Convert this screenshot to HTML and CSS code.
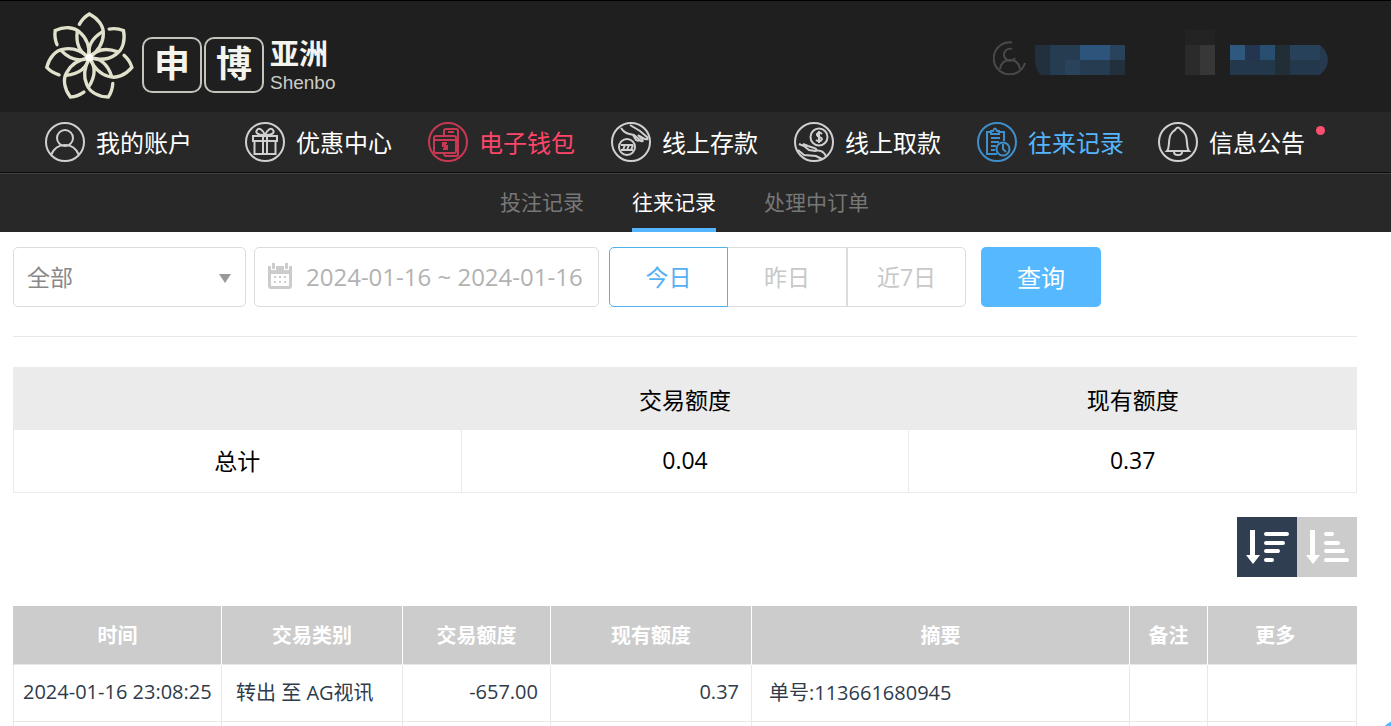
FILE: index.html
```html
<!DOCTYPE html>
<html lang="zh-CN">
<head>
  <meta charset="UTF-8" />
  <meta name="viewport" content="width=device-width, initial-scale=1.0" />
  <title>往来记录</title>
  <link rel="stylesheet" href="styles.css">
</head>
<body>
  <header class="header">
    <a class="logo" href="#">
      <svg class="logo-flower" viewBox="0 0 300 294">
        <defs>
          <g id="petal">
            <path d="M-30 -100 Q-19 -120 0 -131 C26 -118 44 -94 42 -70 Q41 -30 0 0" />
            <path d="M0 0 Q-10 -48 40 -78" />
          </g>
        </defs>
        <g transform="translate(148 149)">
          <use href="#petal" />
          <use href="#petal" transform="rotate(51.43)" />
          <use href="#petal" transform="rotate(102.86)" />
          <use href="#petal" transform="rotate(154.29)" />
          <use href="#petal" transform="rotate(205.71)" />
          <use href="#petal" transform="rotate(257.14)" />
          <use href="#petal" transform="rotate(308.57)" />
          <circle class="core" r="11" />
        </g>
      </svg>
      <span class="logo-box">申</span>
      <span class="logo-box">博</span>
      <span class="logo-side">
        <span class="logo-cn">亚洲</span>
        <span class="logo-en">Shenbo</span>
      </span>
    </a>
    <div class="account">
      <svg class="account-icon" viewBox="0 0 34 34">
        <path d="M19 1.500A16 16 0 1 0 32 22" />
        <path d="M19 8a6 6 0 1 0 3 9M7 28c1-6 5-9 10-9s9 3 10 9" />
      </svg>
      <svg class="account-name" viewBox="0 0 90 30">
        <path fill="#22303e" d="M0 0h15v30H6q-6-6-6-15z" />
        <path fill="#263c50" d="M15 0h30v15H15zM15 15h15v15H15z" />
        <path fill="#28435b" d="M30 15h15v15H30zM75 0h15v15H75z" />
        <path fill="#2d557b" d="M45 0h30v15H45z" />
        <path fill="#263d51" d="M45 15h30v15H45z" />
        <path fill="#22303e" d="M75 15h15v15H75z" />
      </svg>
      <svg class="account-balance" viewBox="0 0 143 45">
        <path fill="#232323" d="M0 0h30v15H0z" />
        <path fill="#2b2b2b" d="M0 15h15v30H0z" />
        <path fill="#373737" d="M15 15h15v30H15z" />
        <path fill="#2e587e" d="M45 15h15v15H45z" />
        <path fill="#24364f" d="M60 15h15v15H60z" />
        <path fill="#294f70" d="M75 15h15v15H75z" />
        <path fill="#24384c" d="M45 30h45v15H45zM105 30h30v15h-30z" />
        <path fill="#222e35" d="M90 15h15v30H90z" />
        <path fill="#27415a" d="M105 15h30v15h-30z" />
        <path fill="#253a4f" d="M135 15q8 7 8 15t-8 15z" />
      </svg>
    </div>
  </header>

  <nav class="main-nav">
    <a class="nav-item" href="#">
      <svg viewBox="0 0 40 40"><circle cx="20" cy="20" r="19" /><circle cx="20" cy="16" r="8" /><path d="M6 33c3-7 8-10 14-10s11 3 14 10" /></svg>
      我的账户
    </a>
    <a class="nav-item" href="#">
      <svg viewBox="0 0 40 40"><circle cx="20" cy="20" r="19" /><path d="M8 14h24v5H8zM9.500 19v13h21V19M18 14v18M22 14v18M19 13c-6 0-9-2-7-5s6 0 8 5c2-5 6-8 8-5s-1 5-7 5" /></svg>
      优惠中心
    </a>
    <a class="nav-item wallet" href="#">
      <svg viewBox="0 0 40 40"><circle cx="20" cy="20" r="19" /><path d="M16 14V9q0-2 2-2h10q2 0 2 2v23q0 2-2 2H18q-2 0-2-3M20 10h6M8 14h18q2 0 2 2v13q0 2-2 2H8q-2 0-2-2V16q0-2 2-2zM6 18h22M19 21h-4v3h4v3h-4M17 20v8" /></svg>
      电子钱包
    </a>
    <a class="nav-item" href="#">
      <svg viewBox="0 0 40 40"><circle cx="20" cy="20" r="19" /><circle cx="16" cy="25" r="8" /><path d="M10 23h12M10 28h12M12 28l2-5M16 28l2-5M20 28l2-5M10 6c3 5 7 6 13 7l7 6q3 1 1-2l-4-4 7 4q4 1 2-2L29 9 19 3M22 13l3 5q3 2 3-1" /></svg>
      线上存款
    </a>
    <a class="nav-item" href="#">
      <svg viewBox="0 0 40 40"><circle cx="20" cy="20" r="19" /><circle cx="25" cy="15" r="8.500" /><path d="M28 12q-3-3-5 0c-1 3 5 3 5 5q-2 4-6 1M25 9v12M5 22l5 2 5 4 6 1q3-2-1-3l-6-2-5-2M4 28l6 5 12 1 6 3M20 29c7-2 10 1 12 5" /></svg>
      线上取款
    </a>
    <a class="nav-item current" href="#">
      <svg viewBox="0 0 40 40"><circle cx="20" cy="20" r="19" /><path d="M20 32H10V10h4M22 10h5v9M14 12V9h2q2-5 4 0h2v3zM14 16h9M14 20h8M14 24h5M14 28h4" /><circle cx="26" cy="27" r="6.500" /><path d="M26 22v5l3 3" /></svg>
      往来记录
    </a>
    <a class="nav-item" href="#">
      <svg viewBox="0 0 40 40"><circle cx="20" cy="20" r="19" /><path d="M9 29c3-3 1-13 4-17q2-3 4-4 3-5 6 0 2 1 4 4c3 4 1 14 4 17zM16 30q0 3 4 3t4-3" /></svg>
      信息公告
      <span class="dot"></span>
    </a>
  </nav>

  <nav class="sub-nav">
    <a href="#">投注记录</a>
    <a class="active" href="#">往来记录</a>
    <a href="#">处理中订单</a>
  </nav>

  <main class="content">
    <form class="filters">
      <div class="select-box">
        <select aria-label="交易类别"><option>全部</option></select>
      </div>
      <div class="date-box">
        <svg viewBox="0 0 26 28">
          <path fill="#ccc" fill-rule="evenodd" d="M1 4h3v4h5V4h8v4h5V4h3v20q0 3-3 3H4q-3 0-3-3zM4 12v12h18V12z" />
          <path fill="#ccc" d="M5 1h3v6H5zM18 1h3v6h-3zM7 14h2v2H7zM12 14h2v2h-2zM17 14h2v2h-2zM7 19h2v2H7zM12 19h2v2h-2zM17 19h2v2h-2z" />
        </svg>
        <input type="text" aria-label="日期" value="2024-01-16 ~ 2024-01-16">
      </div>
      <div class="day-group">
        <button type="button" class="active">今日</button>
        <button type="button">昨日</button>
        <button type="button">近7日</button>
      </div>
      <button type="submit" class="btn">查询</button>
    </form>

    <table class="summary">
      <thead>
        <tr><th></th><th>交易额度</th><th>现有额度</th></tr>
      </thead>
      <tbody>
        <tr><td>总计</td><td>0.04</td><td>0.37</td></tr>
      </tbody>
    </table>

    <div class="sort">
      <button class="active" aria-label="降序">
        <svg viewBox="0 0 60 60"><path d="M13 13h5v25h5l-7 9-7-9h4z" /><path class="bars" d="M29 17h21M29 26h17M29 34h12M29 43h6" /></svg>
      </button>
      <button aria-label="升序">
        <svg viewBox="0 0 60 60"><path d="M13 13h5v25h5l-7 9-7-9h4z" /><path class="bars" d="M29 17h6M29 26h12M29 34h17M29 43h21" /></svg>
      </button>
    </div>

    <table class="records">
      <colgroup>
        <col class="c-time"><col class="c-type"><col class="c-amount"><col class="c-balance"><col class="c-summary"><col class="c-note"><col class="c-more">
      </colgroup>
      <thead>
        <tr><th>时间</th><th>交易类别</th><th>交易额度</th><th>现有额度</th><th>摘要</th><th>备注</th><th class="more">更多</th></tr>
      </thead>
      <tbody>
        <tr>
          <td>2024-01-16 23:08:25</td>
          <td class="type">转出 至 AG视讯</td>
          <td class="num">-657.00</td>
          <td class="num">0.37</td>
          <td class="desc">单号:113661680945</td>
          <td></td>
          <td></td>
        </tr>
        <tr><td></td><td></td><td></td><td></td><td></td><td></td><td></td></tr>
      </tbody>
    </table>
  </main>
  <button class="float-btn" aria-label="客服"></button>
</body>
</html>
```
FILE: styles.css
```css
* {
  box-sizing: border-box;
}
html {
  scrollbar-width: none;
}
body {
  margin: 0;
  background: #fff;
  color: #000;
  font-family: "Open Sans", "Noto Sans CJK SC", sans-serif;
}
a {
  color: inherit;
  text-decoration: none;
}
button, input, select {
  font-family: inherit;
  margin: 0;
}

/* header */
.header {
  display: flex;
  justify-content: space-between;
  height: 112px;
  padding: 0 63px 0 40px;
  border-top: 1px solid #000;
  background: #1f1f1f;
}
.logo {
  display: flex;
  align-items: center;
  color: #f4f4ee;
}
.logo-flower {
  width: 100px;
  height: 98px;
  fill: none;
  stroke: #e2e2cc;
  stroke-width: 10;
  stroke-linecap: round;
}
.logo-flower .core {
  fill: #fff;
  stroke: none;
}
.logo-box {
  width: 60px;
  height: 56px;
  margin: 16px 0 0 2px;
  border: 2px solid #c4c4bc;
  border-radius: 10px;
  font-size: 36px;
  font-weight: bold;
  line-height: 50px;
  text-align: center;
}
.logo-side {
  display: flex;
  flex-direction: column;
  margin: 18px 0 0 6px;
  font-family: "Liberation Sans", "Noto Sans CJK SC", sans-serif;
}
.logo-cn {
  font-size: 29px;
  font-weight: bold;
  line-height: 34px;
}
.logo-en {
  color: #ccccc6;
  font-size: 19px;
  line-height: 22px;
}
.account {
  display: flex;
  align-items: flex-end;
  height: 74px;
}
.account-icon {
  width: 34px;
  height: 34px;
  margin-right: 8px;
  fill: none;
  stroke: #4a4a4a;
  stroke-width: 2;
}
.account-name {
  width: 90px;
  height: 30px;
  margin-right: 60px;
}
.account-balance {
  width: 143px;
  height: 45px;
}

/* navigation */
.main-nav {
  display: grid;
  grid-template-columns: 200px repeat(4, 183px) 181px auto;
  height: 62px;
  padding: 0 0 2px 45px;
  border-bottom: 1px solid #404040;
  box-shadow: inset 0 -1px #0c0c0c;
  background: #282828;
  font-size: 24px;
}
.nav-item {
  display: flex;
  align-items: center;
  gap: 11px;
  color: #fff;
  white-space: nowrap;
}
.nav-item svg {
  width: 40px;
  height: 40px;
  fill: none;
  stroke: #d0d0d0;
  stroke-width: 2;
}
.nav-item.wallet {
  color: #ff4568;
}
.nav-item.wallet svg {
  stroke: #c73853;
}
.nav-item.current {
  color: #54b6ff;
}
.nav-item.current svg {
  stroke: #3f8fca;
}
.dot {
  width: 9px;
  height: 9px;
  margin-bottom: 22px;
  border-radius: 50%;
  background: #ff4f72;
}
.sub-nav {
  display: flex;
  justify-content: center;
  gap: 48px;
  height: 58px;
  padding-right: 22px;
  background: #282828;
  color: #777;
  font-size: 21px;
  line-height: 56px;
}
.sub-nav .active {
  color: #fff;
  box-shadow: inset 0 -4px #54b6ff;
}

/* content */
.content {
  padding: 15px 34px 0 13px;
}
.filters {
  display: flex;
  padding-bottom: 29px;
  border-bottom: 1px solid #e8e8e8;
}
.select-box {
  position: relative;
  width: 233px;
  margin-right: 8px;
}
.select-box::after {
  content: "";
  position: absolute;
  top: 27px;
  right: 15px;
  border: 6px solid transparent;
  border-top: 9px solid #999;
  border-bottom: 0;
  pointer-events: none;
}
.select-box select {
  width: 100%;
  height: 60px;
  padding: 0 13px;
  border: 1px solid #dcdcdc;
  border-radius: 5px;
  background: #fff;
  color: #888;
  font-size: 23px;
  appearance: none;
}
.date-box {
  display: flex;
  align-items: center;
  width: 345px;
  height: 60px;
  margin-right: 10px;
  padding: 0 0 2px 12px;
  border: 1px solid #dcdcdc;
  border-radius: 5px;
}
.date-box svg {
  flex: none;
  width: 26px;
  height: 28px;
}
.date-box input {
  width: 290px;
  padding: 0 0 0 13px;
  border: 0;
  background: none;
  color: #b2b2b2;
  font-size: 24px;
}
.day-group {
  display: flex;
  margin-right: 15px;
}
.day-group button {
  width: 119px;
  height: 60px;
  padding: 0 0 2px;
  border: 1px solid #dcdcdc;
  border-left-width: 0;
  background: #fff;
  color: #c8c8c8;
  font-size: 23px;
}
.day-group button:first-child {
  border-radius: 5px 0 0 5px;
}
.day-group button:last-child {
  border-left-width: 1px;
  border-radius: 0 5px 5px 0;
}
.day-group .active {
  border: 1px solid #54b0ea;
  color: #54b0f5;
}
.btn {
  width: 120px;
  height: 60px;
  padding: 0 0 2px;
  border: 0;
  border-radius: 5px;
  background: #56b8ff;
  color: #fff;
  font-size: 24px;
}
table {
  width: 100%;
  border-collapse: collapse;
  table-layout: fixed;
}
.summary {
  margin-top: 30px;
  font-size: 23px;
  text-align: center;
}
.summary th {
  height: 62px;
  padding: 0;
  border: 1px solid #ebebeb;
  background: #ebebeb;
  font-weight: normal;
}
.summary td {
  height: 63px;
  padding: 0 0 2px;
  border: 1px solid #ebebeb;
}
.sort {
  display: flex;
  justify-content: flex-end;
  margin: 24px 0 29px;
}
.sort button {
  width: 60px;
  height: 60px;
  padding: 0;
  border: 0;
  background: #ccc;
}
.sort .active {
  background: #2f3e51;
}
.sort svg {
  display: block;
  fill: #fff;
}
.sort .bars {
  stroke: #fff;
  stroke-width: 4;
  stroke-linecap: round;
}
.records {
  color: #2f3b4a;
  font-size: 20px;
}
.c-time {
  width: 208px;
}
.c-type {
  width: 181px;
}
.c-amount {
  width: 148px;
}
.c-balance {
  width: 201px;
}
.c-note {
  width: 78px;
}
.c-more {
  width: 149px;
}
.records th {
  height: 58px;
  padding: 0;
  border-left: 1px solid #fff;
  background: #ccc;
  color: #fff;
}
.records th:first-child {
  border-left-color: #ccc;
}
.records th.more {
  padding-right: 14px;
}
.records td {
  height: 57px;
  padding: 0 0 2px 9px;
  border: 1px solid #e8e8e8;
  white-space: nowrap;
}
.records td.type {
  padding-left: 14px;
}
.records td.num {
  padding: 0 12px 2px 0;
  text-align: right;
}
.records td.desc {
  padding-left: 17px;
}
.float-btn {
  position: fixed;
  right: -44px;
  bottom: -52px;
  width: 60px;
  height: 60px;
  border: 0;
  border-radius: 50%;
  background: #56b8ff;
}
```
